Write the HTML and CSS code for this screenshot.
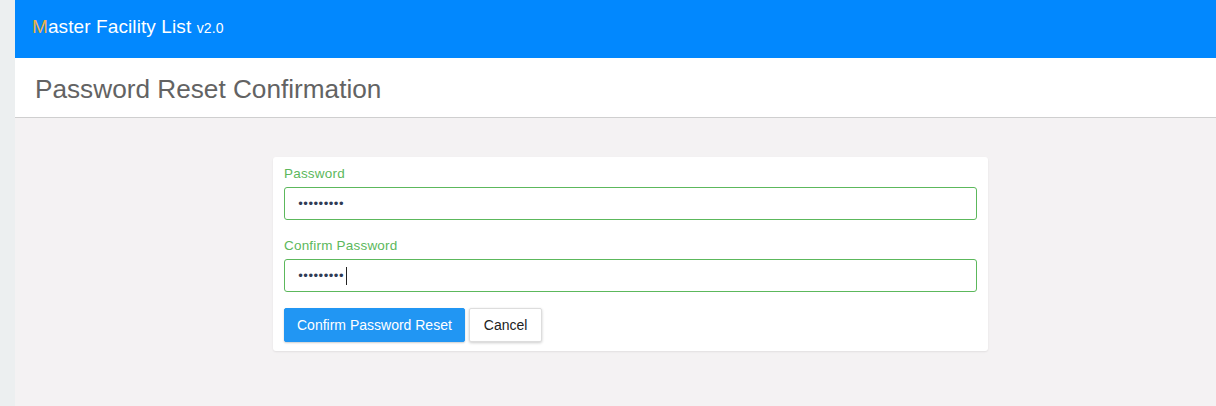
FILE: index.html
```html
<!DOCTYPE html>
<html>
<head>
<meta charset="utf-8">
<link rel="stylesheet" href="styles.css">
</head>
<body>
<div class="layout">
  <aside class="side"></aside>
  <main class="main">
    <header class="topbar">
      <span class="brand"><span class="brand-m">M</span>aster Facility List <small class="ver">v2.0</small></span>
    </header>
    <div class="titlebar">
      <h1 class="title">Password Reset Confirmation</h1>
    </div>
    <section class="content">
      <form class="card">
        <label class="label">Password</label>
        <div class="input"><span class="dots">•••••••••</span></div>
        <label class="label">Confirm Password</label>
        <div class="input"><span class="dots">•••••••••</span><span class="caret"></span></div>
        <div class="actions">
          <button type="button" class="btn btn-primary">Confirm Password Reset</button>
          <button type="button" class="btn btn-default">Cancel</button>
        </div>
      </form>
    </section>
  </main>
</div>
</body>
</html>
```
FILE: styles.css
```css
html, body {
  margin: 0;
  padding: 0;
  height: 100%;
}
body {
  font-family: "Liberation Sans", Arial, sans-serif;
  background: #f4f2f3;
}
.layout {
  display: flex;
  height: 406px;
}
.side {
  width: 15px;
  flex: none;
  background: #eceff0;
}
.main {
  flex: 1;
  display: flex;
  flex-direction: column;
  background: #f4f2f3;
}
.topbar {
  height: 58px;
  background: #0288fe;
  display: flex;
  align-items: center;
  padding-left: 17px;
  padding-bottom: 4px;
  box-sizing: border-box;
}
.brand {
  color: #fff;
  font-size: 19px;
  letter-spacing: 0.1px;
}
.brand-m {
  color: #f0b24a;
}
.ver {
  font-size: 14px;
  margin-left: 0;
}
.titlebar {
  height: 60px;
  background: #fff;
  border-bottom: 1px solid #cfcfcf;
  display: flex;
  align-items: center;
  padding-left: 20px;
  box-sizing: border-box;
}
.title {
  margin: 0;
  font-weight: normal;
  font-size: 26.2px;
  color: #636363;
  padding-top: 4px;
}
.content {
  display: flex;
  justify-content: center;
  padding-top: 39px;
  padding-left: 30px;
}
.card {
  width: 715px;
  box-sizing: border-box;
  background: #fff;
  border-radius: 3px;
  box-shadow: 0 1px 2px rgba(0,0,0,0.08);
  padding: 7px 11px 9px 11px;
  display: flex;
  flex-direction: column;
}
.label {
  color: #5cb85c;
  font-size: 13.5px;
  letter-spacing: 0.2px;
  line-height: 16px;
  margin-top: 2px;
  margin-bottom: 5px;
}
.input {
  height: 33px;
  box-sizing: border-box;
  border: 1px solid #5cb85c;
  border-radius: 3px;
  display: flex;
  align-items: center;
  padding-left: 12px;
  margin-bottom: 16px;
  color: #2f3b55;
}
.dots {
  font-size: 12px;
  letter-spacing: -2px;
  font-family: "DejaVu Sans", sans-serif;
  line-height: 1;
}
.caret {
  width: 1px;
  height: 18px;
  background: #222;
  margin-left: 3px;
}
.actions {
  display: flex;
  gap: 4px;
  margin-top: 0;
}
.btn {
  height: 34px;
  font-family: "Liberation Sans", Arial, sans-serif;
  font-size: 14px;
  border-radius: 2px;
  cursor: pointer;
}
.btn-primary {
  padding: 0 12px;
  background: #2196f3;
  color: #fff;
  border: 1px solid #2196f3;
  box-shadow: 0 1px 2px rgba(0,0,0,0.2);
}
.btn-default {
  padding: 0 14px;
  background: #fff;
  color: #222;
  border: 1px solid #ddd;
  box-shadow: 0 1px 3px rgba(0,0,0,0.2);
}
```
